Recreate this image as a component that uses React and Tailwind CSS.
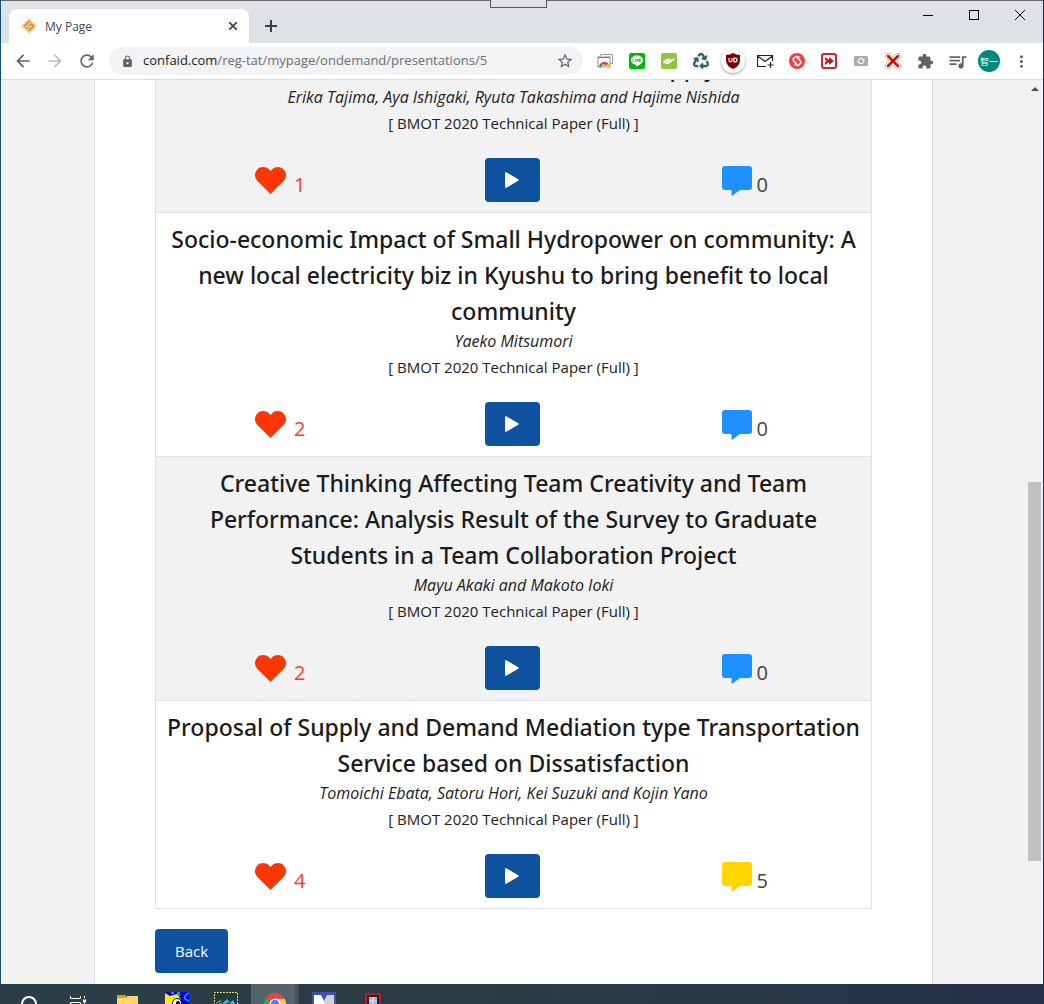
import { FaRecycle } from 'react-icons/fa';
import {
    MdArrowBack,
    MdArrowForward,
    MdExtension,
    MdLock,
    MdMoreVert,
    MdQueueMusic,
    MdRefresh,
    MdStarBorder,
} from 'react-icons/md';

const PAPER_TYPE = '[ BMOT 2020 Technical Paper (Full) ]';

const PRESENTATIONS = [
    {
        title: 'A Decision Model for Biomass Supply',
        authors: 'Erika Tajima, Aya Ishigaki, Ryuta Takashima and Hajime Nishida',
        likes: 1,
        comments: 0,
    },
    {
        title: 'Socio-economic Impact of Small Hydropower on community: A new local electricity biz in Kyushu to bring benefit to local community',
        authors: 'Yaeko Mitsumori',
        likes: 2,
        comments: 0,
    },
    {
        title: 'Creative Thinking Affecting Team Creativity and Team Performance: Analysis Result of the Survey to Graduate Students in a Team Collaboration Project',
        authors: 'Mayu Akaki and Makoto Ioki',
        likes: 2,
        comments: 0,
    },
    {
        title: 'Proposal of Supply and Demand Mediation type Transportation Service based on Dissatisfaction',
        authors: 'Tomoichi Ebata, Satoru Hori, Kei Suzuki and Kojin Yano',
        likes: 4,
        comments: 5,
    },
];

/* ---------- icons ---------- */

function HeartIcon() {
    return (
        <svg width="31" height="27" viewBox="0 0 31 27" fill="#ff3600">
            <path d="M15.500 27 2.600 14.200C-.9 10.700-.8 5.500 2.400 2.400 5.700-.8 10.700-.6 14 2.500L15.500 4 17 2.500C20.300-.6 25.300-.8 28.600 2.400 31.800 5.500 31.900 10.700 28.400 14.200Z" />
        </svg>
    );
}

function CommentIcon({ active }) {
    return (
        <svg width="31" height="30" viewBox="0 0 31 30" className={active ? 'fill-[#ffd600]' : 'fill-[#1e90ff]'}>
            <path d="M3 0H27Q30 0 30 3V21Q30 24 27 24H18L10.500 29.500Q9.500 30 9.500 29V24H3Q0 24 0 21V3Q0 0 3 0Z" />
        </svg>
    );
}

function PlayIcon() {
    return (
        <svg width="14" height="16" viewBox="0 0 14 16" fill="#fff">
            <path d="M0 1.200Q0-.3 1.400.3L13.200 7.200Q14.300 8 13.200 8.800L1.400 15.700Q0 16.300 0 14.800Z" />
        </svg>
    );
}

function Favicon() {
    return (
        <svg width="16" height="16" viewBox="0 0 16 16">
            <path d="M8 0 16 8 8 16 0 8Z" fill="#fbd3a2" />
            <path d="M8 2 9.500 4 14 8 8 14 6.500 12 2 8Z" fill="#f6921e" />
            <path d="M4 8.500H6.500L8 5.500H10M7 11.500 8.500 8.500H11" stroke="#fff3e2" fill="none" />
        </svg>
    );
}

function CastIcon() {
    return (
        <svg width="16" height="16" viewBox="0 0 16 16">
            <path d="M3.500 3V1.500H15.500V10.500H13.500" fill="none" stroke="#9a9a9a" />
            <rect x="1" y="4" width="12" height="10" fill="#fff" stroke="#8d8d8d" />
            <path d="M1 4.500H13" stroke="#777" />
            <path d="M2 14A5 5 0 0 1 4.500 9.700L7 14Z" fill="#34a853" />
            <path d="M3 11.500A5 5 0 0 1 12 11.500L12 14H9L7 11.500Z" fill="#ea4335" />
            <path d="M10 11H12V14H8Z" fill="#fbbc05" />
            <path d="M5 14A2.300 2.300 0 0 1 9.500 14Z" fill="#4285f4" stroke="#fff" strokeWidth=".7" />
        </svg>
    );
}

function LineIcon() {
    return (
        <svg width="16" height="16" viewBox="0 0 16 16">
            <rect width="16" height="16" rx="2" fill="#00b900" />
            <path d="M8 2.500C4.700 2.500 2 4.600 2 7.300 2 9.800 4.200 11.500 7.200 11.900 7.700 12 7.500 13 7.500 13.700 10 12.500 14 10 14 7.300 14 4.600 11.300 2.500 8 2.500Z" fill="#fff" />
            <path d="M4 6V8.500H5.500M6.500 6V8.500M7.800 8.500V6L9.300 8.500V6M12 6H10.500V8.500H12M10.500 7.200H12" fill="none" stroke="#00b900" strokeWidth=".7" />
        </svg>
    );
}

function GreenLeafIcon() {
    return (
        <svg width="16" height="16" viewBox="0 0 16 16">
            <rect width="16" height="16" rx="2" fill="#8fc642" />
            <path d="M2 9C3 6.500 6 5.200 9 5.800 10 6 10.700 6.700 11 7 11.500 5.800 12.500 5 14 5.200 13.500 6.800 12.500 7.500 11.200 7.700 10.500 10 7.500 11.500 4.500 10.800 3.800 10.600 2.500 10 2 9Z" fill="#fff" />
            <path d="M4 9.300 9 7.500" stroke="#8fc642" strokeWidth=".5" />
        </svg>
    );
}

function ShieldIcon() {
    return (
        <svg width="14" height="16" viewBox="0 0 14 16">
            <path d="M7 0Q10 2 14 2V8Q13.500 13 7 16 .5 13 0 8V2Q4 2 7 0Z" fill="#800000" />
            <path d="M3 5V7.500Q3 9 4.500 9 6 9 6 7.500V5M8 5V9H9Q11 9 11 7 11 5 9 5H7.500" fill="none" stroke="#fff" strokeWidth="1.200" />
        </svg>
    );
}

function MailPlusIcon() {
    return (
        <svg width="17" height="14" viewBox="0 0 17 14" fill="none" stroke="#222">
            <path d="M9 12.500H.500V1.500H15.500V7M.500 2 8 7.500 15.500 2M13.500 8V14M10.500 11H16.500" strokeWidth="1.200" />
        </svg>
    );
}

function RedSyncIcon() {
    return (
        <svg width="16" height="16" viewBox="0 0 16 16">
            <circle cx="8" cy="8" r="8" fill="#f93a3a" />
            <path d="M8 3 4.500 5.500Q3.500 7 5 8.500L7.500 11.500M8 13 11.500 10.500Q12.500 9 11 7.500L8.500 4.500" fill="none" stroke="#fff" strokeWidth="1.700" />
            <path d="M8 9V12.500H4.500ZM8 7V3.500H11.500Z" fill="#fff" />
        </svg>
    );
}

function FastForwardIcon() {
    return (
        <svg width="16" height="16" viewBox="0 0 16 16">
            <rect width="16" height="16" rx="3" fill="#c4272b" />
            <rect x="2" y="2" width="12" height="12" rx="1" fill="#fff" />
            <path d="M4 4 8 7V4L13 8 8 12V9L4 12Z" fill="#b5171c" />
            <path d="M4 7 6 8 4 9Z" fill="#fff" />
        </svg>
    );
}

function GrayCameraIcon() {
    return (
        <svg width="14" height="10" viewBox="0 0 14 10">
            <rect width="14" height="10" rx="1.500" fill="#a9a9a9" />
            <path d="M4.300 4.500A2.800 2.800 0 0 1 9.500 4M9.700 5.500A2.800 2.800 0 0 1 4.500 6" fill="none" stroke="#fff" strokeWidth="1.200" />
            <path d="M10.500 2.500V5H8ZM3.500 7.500V5H6Z" fill="#fff" />
        </svg>
    );
}

function RedCrossIcon() {
    return (
        <svg width="16" height="16" viewBox="0 0 16 16" strokeLinecap="round">
            <path d="M3 3 13 13M13 3 3 13" stroke="#d98a8a" strokeWidth="6" />
            <path d="M3 3 13 13M13 3 3 13" stroke="#fff" strokeWidth="4.800" />
            <path d="M3 3 13 13M13 3 3 13" stroke="#c80f0f" strokeWidth="2.500" />
        </svg>
    );
}

function ChromeIcon() {
    return (
        <svg width="22" height="22" viewBox="0 0 22 22">
            <circle cx="11" cy="11" r="11" fill="#35a256" />
            <path d="M11 11 1.500 5.500A11 11 0 0 1 20.500 5.500Z" fill="#dd4b3e" />
            <path d="M11 6H20.800A11 11 0 0 1 11 22Z" fill="#fccd48" />
            <circle cx="11" cy="11" r="5.500" fill="#fff" />
            <circle cx="11" cy="11" r="4.300" fill="#4285f4" />
        </svg>
    );
}

/* ---------- browser chrome ---------- */

function IconButton({ label, children }) {
    return (
        <button type="button" aria-label={label} className="flex h-8 w-8 shrink-0 items-center justify-center">
            {children}
        </button>
    );
}

function TitleBar() {
    return (
        <header className="relative flex h-[43px] shrink-0 items-start border-t border-[#66666a] bg-[#dee1e6] pl-2">
            <div className="mt-2 flex h-[34px] w-60 items-center rounded-t-lg bg-white pr-2 pl-3">
                <Favicon />
                <span className="ml-2 flex-1 pt-[2px] text-xs text-[#45494d]">My Page</span>
                <button type="button" aria-label="Close tab" className="flex h-4 w-4 items-center justify-center">
                    <svg width="8" height="8" viewBox="0 0 8 8" stroke="#3c4043" strokeWidth="1.600">
                        <path d="M0 0 8 8M8 0 0 8" />
                    </svg>
                </button>
            </div>
            <button type="button" aria-label="New tab" className="mt-[9px] ml-2 flex h-8 w-7 items-center justify-center">
                <svg width="12" height="12" viewBox="0 0 12 12" stroke="#3c4043" strokeWidth="2">
                    <path d="M6 0V12M0 6H12" />
                </svg>
            </button>
            <div className="absolute -top-px left-[489px] h-2 w-[57px] border border-t-0 border-[#55585c] bg-[#e2e0e6]" />
            <div className="ml-auto flex">
                <button type="button" aria-label="Minimize" className="flex h-7 w-[46px] items-center justify-center">
                    <svg width="10" height="10" viewBox="0 0 10 10" stroke="#000">
                        <path d="M0 5.500H10" />
                    </svg>
                </button>
                <button type="button" aria-label="Maximize" className="flex h-7 w-[46px] items-center justify-center">
                    <svg width="10" height="10" viewBox="0 0 10 10" stroke="#000" fill="none">
                        <rect x=".5" y=".5" width="9" height="9" />
                    </svg>
                </button>
                <button type="button" aria-label="Close" className="flex h-7 w-[46px] items-center justify-center">
                    <svg width="10" height="10" viewBox="0 0 10 10" stroke="#000">
                        <path d="M0 0 10 10M10 0 0 10" />
                    </svg>
                </button>
            </div>
        </header>
    );
}

function Toolbar() {
    return (
        <nav className="flex h-[37px] shrink-0 items-center border-b border-[#dadce0] bg-white px-[6px]">
            <IconButton label="Back"><MdArrowBack size={20} color="#5f6368" /></IconButton>
            <IconButton label="Forward"><MdArrowForward size={20} color="#babcbe" /></IconButton>
            <IconButton label="Reload"><MdRefresh size={20} color="#5f6368" /></IconButton>
            <div className="mx-[6px] flex h-7 flex-1 items-center rounded-full bg-[#f1f3f4] pr-[9px] pl-3">
                <MdLock size={13} color="#5f6368" />
                <div className="ml-[9px] flex flex-1 text-[13px]">
                    <span className="text-[#202124]">confaid.com</span>
                    <span className="text-[#6b6f73]">/reg-tat/mypage/ondemand/presentations/5</span>
                </div>
                <button type="button" aria-label="Bookmark this page">
                    <MdStarBorder size={18} color="#5f6368" />
                </button>
            </div>
            <IconButton label="Cast"><CastIcon /></IconButton>
            <IconButton label="Line"><LineIcon /></IconButton>
            <IconButton label="Green extension"><GreenLeafIcon /></IconButton>
            <IconButton label="Recycle"><FaRecycle size={16} color="#2d6270" stroke="#2d6270" strokeWidth={16} /></IconButton>
            <IconButton label="Ad blocker">
                <span className="flex h-6 w-6 items-center justify-center rounded-full bg-white shadow-[0_1px_3px_#9a9a9a]">
                    <ShieldIcon />
                </span>
            </IconButton>
            <IconButton label="Mail"><MailPlusIcon /></IconButton>
            <IconButton label="Sync"><RedSyncIcon /></IconButton>
            <IconButton label="Fast forward"><FastForwardIcon /></IconButton>
            <IconButton label="Capture"><GrayCameraIcon /></IconButton>
            <IconButton label="Block"><RedCrossIcon /></IconButton>
            <IconButton label="Extensions"><MdExtension size={17} color="#5f6368" /></IconButton>
            <IconButton label="Media"><MdQueueMusic size={21} color="#5f6368" /></IconButton>
            <IconButton label="Profile">
                <span className="flex h-[22px] w-[22px] items-center justify-center rounded-full bg-[#00897b] font-['Noto_Sans_CJK_JP',sans-serif] text-[9px] leading-none text-white">
                    智一
                </span>
            </IconButton>
            <IconButton label="Menu"><MdMoreVert size={19} color="#5f6368" /></IconButton>
        </nav>
    );
}

function Scrollbar() {
    return (
        <div className="flex w-[17px] shrink-0 flex-col items-center bg-[#f1f1f1]">
            <svg width="8" height="4" viewBox="0 0 8 4" fill="#505050" className="mt-[7px]">
                <path d="M4 0 8 4H0Z" />
            </svg>
            <div className="flex-[391]" />
            <div className="w-[13px] flex-[379] bg-[#c1c1c1]" />
            <div className="flex-[123]" />
        </div>
    );
}

/* ---------- page ---------- */

function Presentation({ title, authors, likes, comments }) {
    return (
        <li className="border-b border-[#dee2e6] px-1 pt-2 pb-[10px] text-center odd:bg-[#f2f2f2]">
            <h2 className="font-['Noto_Sans',sans-serif] text-[23px] leading-9 font-medium text-[#1b1b1b]">{title}</h2>
            <p className="text-base leading-[25px] text-[#212121] italic">{authors}</p>
            <p className="text-[15px] leading-[26px] text-[#212121]">{PAPER_TYPE}</p>
            <div className="mt-[22px] grid grid-cols-3 items-center justify-items-center pr-[6px] pl-1">
                <button type="button" className="flex items-center gap-2 text-xl leading-8 text-[#ff3c1a]">
                    <HeartIcon />
                    <span className="pt-[10px]">{likes}</span>
                </button>
                <button
                    type="button"
                    aria-label="Play"
                    className="flex h-11 w-[55px] items-center justify-center rounded bg-[#0e52a0]"
                >
                    <PlayIcon />
                </button>
                <button type="button" className="flex items-center gap-1 pt-px text-xl leading-8 text-[#444]">
                    <CommentIcon active={comments > 0} />
                    <span className="pt-2">{comments}</span>
                </button>
            </div>
        </li>
    );
}

function Taskbar() {
    return (
        <footer className="flex h-5 shrink-0 items-start overflow-hidden bg-linear-to-r from-[#2c3f47] via-[#2b3b46] to-[#233048] pl-1">
            <div className="flex w-[49px] justify-center pt-3">
                <svg width="16" height="16" viewBox="0 0 16 16" fill="none" stroke="#fff" strokeWidth="2">
                    <circle cx="8" cy="8" r="7" />
                </svg>
            </div>
            <div className="flex w-[49px] justify-center pt-3">
                <svg width="16" height="14" viewBox="0 0 16 14" fill="none" stroke="#fff">
                    <path d="M.5 0V2.500H10.500V0M.5 12V6.500H10.500V12M14.500 0V2M14.500 7V12" />
                    <rect x="13.500" y="4" width="2" height="2" fill="#fff" />
                </svg>
            </div>
            <div className="flex w-[50px] justify-center pt-[11px]">
                <svg width="21" height="16" viewBox="0 0 21 16">
                    <path d="M0 0H9V3H0Z" fill="#e09b0c" />
                    <path d="M0 3H9L10 1H21V16H0Z" fill="#ffd766" />
                </svg>
            </div>
            <div className="flex w-[49px] justify-center pt-2">
                <svg width="24" height="16" viewBox="0 0 24 16">
                    <rect width="24" height="16" fill="#0000e8" />
                    <path d="M0 1 5 4 12 2 15 6 17 12V16H0V5Z" fill="#ffee00" />
                    <circle cx="12" cy="11" r="4.500" fill="#fff" stroke="#000" />
                    <circle cx="13" cy="11" r="2" />
                    <path d="M6 1H9M12 1H14V4" stroke="#18b070" strokeWidth="2" fill="none" />
                    <path d="M24 1Q19 3 20 7L24 9M18 13 22 16" stroke="#00a8ff" strokeWidth="1.500" fill="none" />
                </svg>
            </div>
            <div className="flex w-[50px] justify-center pt-2">
                <svg width="24" height="16" viewBox="0 0 24 16">
                    <rect width="24" height="16" fill="#253840" />
                    <path d="M.5 16V.5H23.500V16" fill="none" stroke="#e4e86a" strokeDasharray="2 1" />
                    <path d="M2 11 6 8 9 11 13 7 16 11 19 8 21 11 18 14H4Z" fill="#27c8cc" />
                    <path d="M3 12 7 10 10 13 14 11 18 13" stroke="#000" fill="none" />
                </svg>
            </div>
            <div className="flex h-5 w-11 justify-center bg-[#53646b] pt-[9px] pl-1">
                <ChromeIcon />
            </div>
            <div className="h-5 w-1 bg-[#43545c]" />
            <div className="flex w-[49px] justify-center pt-2">
                <svg width="24" height="16" viewBox="0 0 24 16">
                    <rect width="24" height="16" fill="#3f51b5" />
                    <path d="M2 3H9L12 9V16H2Z" fill="#fff" />
                    <path d="M22 3H15L12 9V16H22Z" fill="#d3d3d6" />
                </svg>
            </div>
            <div className="flex w-[49px] justify-center pt-[9px]">
                <svg width="20" height="16" viewBox="0 0 20 16">
                    <rect y="6" width="20" height="6" fill="#333" />
                    <rect x="2" width="16" height="16" rx="1" fill="#c01828" />
                    <rect x="4" y="2" width="12" height="14" fill="#222" />
                    <rect x="6" y="4" width="8" height="8" fill="#aab2cc" />
                    <path d="M10 4V12M6 8H14" stroke="#e4e8f4" />
                </svg>
            </div>
        </footer>
    );
}

export default function App() {
    return (
        <div className="flex h-screen flex-col overflow-hidden font-['Open_Sans','Noto_Sans',sans-serif]">
            <div className="flex min-h-0 flex-1 flex-col border-x border-l-[#1b4f70] border-r-[#233048]">
                <TitleBar />
                <Toolbar />
                <div className="flex min-h-0 flex-1">
                    {/* scrolled to the end of the list */}
                    <div className="flex min-w-0 flex-1 flex-col justify-end overflow-hidden bg-[#f2f2f2]">
                        <main className="mx-auto w-full max-w-[839px] shrink-0 border-x border-[#dcdcdc] bg-white px-[60px] pb-[11px]">
                            <ul className="border-x border-t border-[#dee2e6]">
                                {PRESENTATIONS.map((item) => (
                                    <Presentation key={item.title} {...item} />
                                ))}
                            </ul>
                            <button
                                type="button"
                                className="mt-5 h-11 rounded bg-[#0e52a0] px-5 text-[15px] text-white"
                            >
                                Back
                            </button>
                        </main>
                    </div>
                    <Scrollbar />
                </div>
            </div>
            <Taskbar />
        </div>
    );
}
